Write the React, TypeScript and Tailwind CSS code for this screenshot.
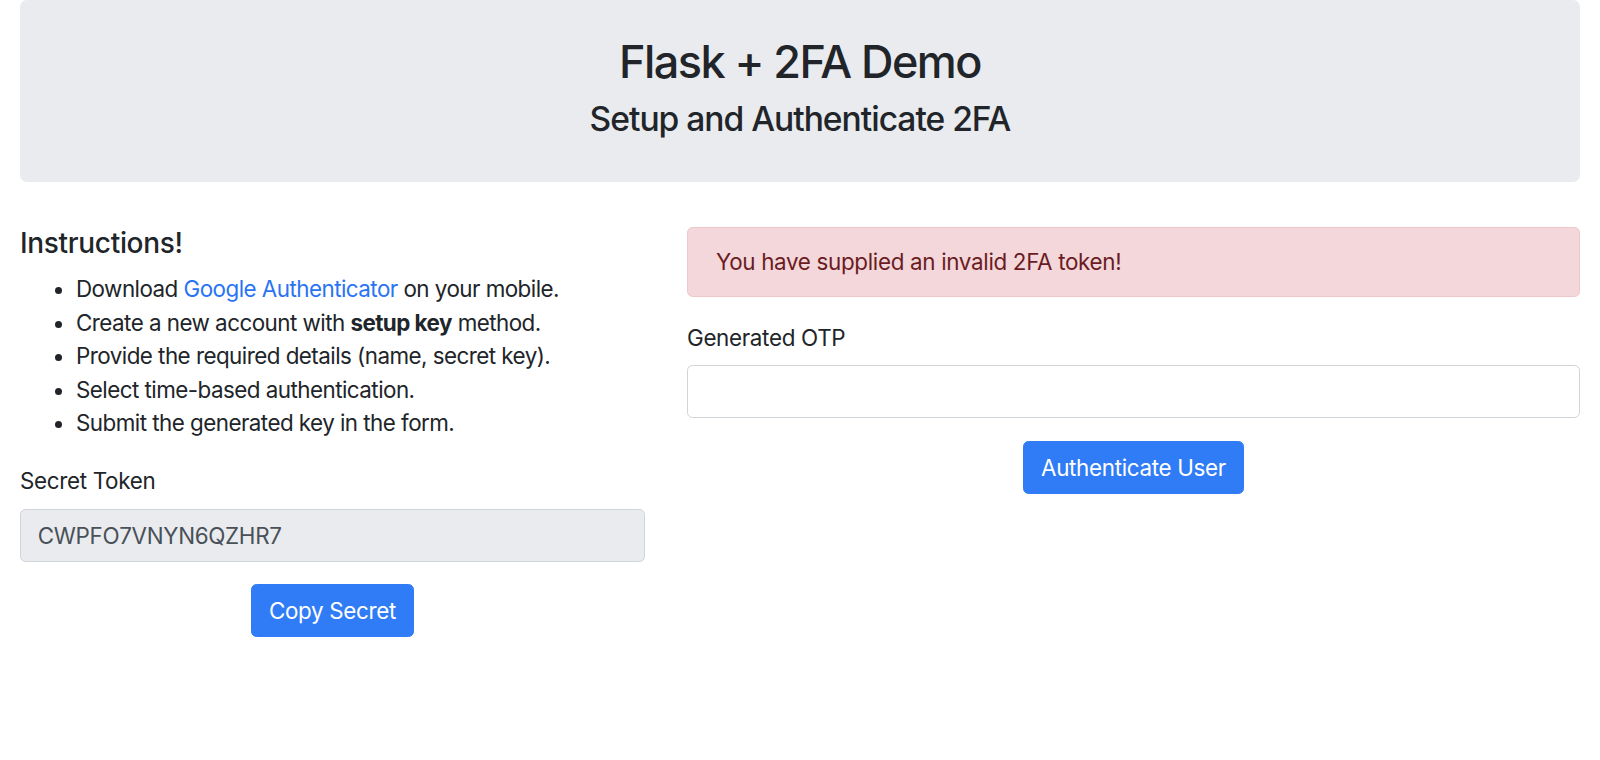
import React from "react";

export default function App() {
  return (
    <div className="min-h-[760px] bg-white px-[20px] font-['Inter','Noto_Sans',sans-serif] text-[#212529] tracking-[-0.02em]">
      <div className="rounded-[7px] bg-[#e9ebef] pt-[35px] pb-[43px] text-center">
        <h2 className="text-[45px] leading-[54px] font-medium tracking-[-0.035em]">Flask + 2FA Demo</h2>
        <h4 className="mt-[10px] text-[33.6px] leading-[40.3px] font-medium tracking-[-0.03em]">Setup and Authenticate 2FA</h4>
      </div>

      <div className="mt-[45px] flex gap-[42px]">
        <div className="w-[625px] shrink-0">
          <h5 className="mb-[11.2px] text-[28px] leading-[33.6px] font-medium">Instructions!</h5>
          <ul className="mb-[24px] list-disc pl-[56px] text-[22.4px] leading-[33.6px] tracking-[-0.024em]">
            <li>
              Download <a className="text-[#2a74f3]">Google Authenticator</a> on your mobile.
            </li>
            <li>
              Create a new account with <b className="font-bold">setup key</b> method.
            </li>
            <li>Provide the required details (name, secret key).</li>
            <li>Select time-based authentication.</li>
            <li>Submit the generated key in the form.</li>
          </ul>
          <label className="mb-[11.2px] block text-[22.4px] leading-[33.6px]">Secret Token</label>
          <div className="flex h-[53px] w-full items-center rounded-[5.6px] border border-[#cfd4d9] bg-[#e9ebef] px-[16.8px] text-[22.4px] text-[#495057]">
            CWPFO7VNYN6QZHR7
          </div>
          <button className="mx-auto mt-[22.4px] block h-[53px] rounded-[5.6px] border border-[#2f7cf6] bg-[#2f7cf6] px-[16.8px] text-[22.4px] leading-[33.6px] text-white">
            Copy Secret
          </button>
        </div>

        <div className="flex-1">
          <div className="flex h-[70px] items-center rounded-[5.6px] border border-[#efc7cb] bg-[#f3d7da] px-[28px] text-[22.4px] text-[#6b1c23]">
            You have supplied an invalid 2FA token!
          </div>
          <label className="mt-[23.4px] mb-[11.2px] block text-[22.4px] leading-[33.6px]">Generated OTP</label>
          <div className="h-[53px] w-full rounded-[5.6px] border border-[#cfd4d9] bg-white" />
          <button className="mx-auto mt-[23px] block h-[53px] rounded-[5.6px] border border-[#2f7cf6] bg-[#2f7cf6] px-[16.8px] text-[22.4px] leading-[33.6px] text-white">
            Authenticate User
          </button>
        </div>
      </div>
    </div>
  );
}
